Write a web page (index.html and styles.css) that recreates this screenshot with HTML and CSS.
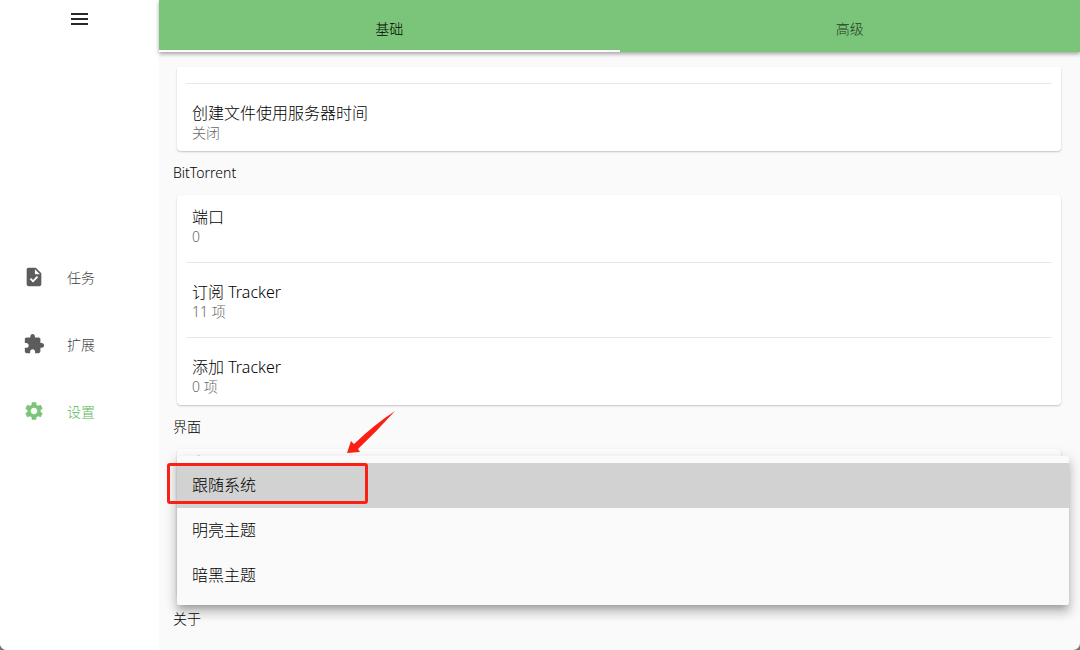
FILE: index.html
```
<!DOCTYPE html>
<html lang="zh-CN">

<head>
  <meta charset="UTF-8">
  <meta name="viewport" content="width=device-width, initial-scale=1.0">
  <title>设置</title>
  <link rel="stylesheet" href="styles.css">
</head>

<body>
  <div class="app">
    <!-- Sidebar -->
    <aside class="sidebar">
      <button class="menu-toggle" type="button" aria-label="菜单">
        <svg width="18" height="12" viewBox="0 0 18 12">
          <path d="M0 0h17v2H0zM0 5h17v2H0zM0 10h17v2H0z" fill="#2b2728"/>
        </svg>
      </button>
      <nav class="nav">
        <a href="#tasks">
          <svg width="22" height="22" viewBox="0 0 24 24">
            <path fill="#5c5c5c" d="M14 2H6c-1.1 0-1.99.9-1.99 2L4 20c0 1.1.89 2 1.99 2H18c1.1 0 2-.9 2-2V8l-6-6zm-3.06 16L7.4 14.46l1.41-1.41 2.12 2.12 4.24-4.24 1.41 1.41L10.94 18zM13 9V3.5L18.5 9H13z"/>
          </svg>
          <span>任务</span>
        </a>
        <a href="#extensions">
          <svg width="22" height="22" viewBox="0 0 24 24">
            <path fill="#5c5c5c" d="M20.5 11H19V7c0-1.1-.9-2-2-2h-4V3.5C13 2.12 11.88 1 10.5 1S8 2.12 8 3.5V5H4c-1.1 0-1.99.9-1.99 2v3.8H3.5c1.49 0 2.7 1.21 2.7 2.7s-1.21 2.7-2.7 2.7H2V20c0 1.1.9 2 2 2h3.8v-1.5c0-1.49 1.21-2.7 2.7-2.7 1.49 0 2.7 1.21 2.7 2.7V22H17c1.1 0 2-.9 2-2v-4h1.5c1.38 0 2.5-1.12 2.5-2.5S21.88 11 20.5 11z"/>
          </svg>
          <span>扩展</span>
        </a>
        <a href="#settings" class="active">
          <svg width="22" height="22" viewBox="0 0 24 24">
            <path fill="#7ac578" d="M19.14 12.94c.04-.3.06-.61.06-.94 0-.32-.02-.64-.07-.94l2.03-1.58c.18-.14.23-.41.12-.61l-1.92-3.32c-.12-.22-.37-.29-.59-.22l-2.39.96c-.5-.38-1.03-.7-1.62-.94l-.36-2.54c-.04-.24-.24-.41-.48-.41h-3.84c-.24 0-.43.17-.47.41l-.36 2.54c-.59.24-1.13.57-1.62.94l-2.39-.96c-.22-.08-.47 0-.59.22L2.74 8.87c-.12.21-.08.47.12.61l2.03 1.58c-.05.3-.09.63-.09.94s.02.64.07.94l-2.03 1.58c-.18.14-.23.41-.12.61l1.92 3.32c.12.22.37.29.59.22l2.39-.96c.5.38 1.03.7 1.62.94l.36 2.54c.05.24.24.41.48.41h3.84c.24 0 .44-.17.47-.41l.36-2.54c.59-.24 1.13-.56 1.62-.94l2.39.96c.22.08.47 0 .59-.22l1.92-3.32c.12-.22.07-.47-.12-.61l-2.01-1.58zM12 15.6c-1.98 0-3.6-1.62-3.6-3.6s1.62-3.6 3.6-3.6 3.6 1.62 3.6 3.6-1.62 3.6-3.6 3.6z"/>
          </svg>
          <span>设置</span>
        </a>
      </nav>
    </aside>

    <!-- Main -->
    <main class="main">
      <div class="tabs">
        <button class="tab active" type="button">基础</button>
        <button class="tab" type="button">高级</button>
      </div>

      <div class="content">
        <div class="card card-cut">
          <hr>
          <div class="item">
            <div class="item-title">创建文件使用服务器时间</div>
            <div class="item-value">关闭</div>
          </div>
        </div>

        <h2>BitTorrent</h2>
        <div class="card">
          <div class="item">
            <div class="item-title">端口</div>
            <div class="item-value">0</div>
          </div>
          <hr>
          <div class="item">
            <div class="item-title">订阅 Tracker</div>
            <div class="item-value">11 项</div>
          </div>
          <hr>
          <div class="item">
            <div class="item-title">添加 Tracker</div>
            <div class="item-value">0 项</div>
          </div>
        </div>

        <h2>界面</h2>
        <div class="card card-theme">
          <div class="item-title">主题</div>

          <!-- Theme dropdown, open -->
          <div class="dropdown">
            <button class="selected" type="button">跟随系统</button>
            <button type="button">明亮主题</button>
            <button type="button">暗黑主题</button>
            <div class="highlight"></div>
            <svg class="arrow" width="48" height="43" viewBox="0 0 48 43">
              <path fill="#fb2016" d="M48 0Q28 13 7 33L4 30L0 42L13 41L11 38Q30 20 48 0Z"/>
            </svg>
          </div>
        </div>

        <h2>关于</h2>
      </div>
    </main>
  </div>
</body>

</html>
```
FILE: styles.css
```
* {
  box-sizing: border-box;
}

body {
  font-family: "Noto Sans", "Noto Sans CJK SC", sans-serif;
  font-weight: 300;
  margin: 0;
  background-color: #777777;
  color: #000000;
}

button {
  font: inherit;
  color: inherit;
  border: none;
  background: none;
  padding: 0;
  cursor: pointer;
}

.app {
  display: flex;
  min-height: 100vh;
  background-color: #fafafa;
  border-radius: 0 0 7px 7px;
  overflow: hidden;
}

/* Sidebar */
.sidebar {
  display: flex;
  flex-direction: column;
  flex: 0 0 159px;
  background-color: #ffffff;
}

.menu-toggle {
  display: flex;
  justify-content: center;
  align-items: center;
  height: 38px;
}

.nav {
  display: flex;
  flex-direction: column;
  justify-content: center;
  flex: 1;
}

.nav a {
  display: flex;
  align-items: center;
  gap: 22px;
  height: 67px;
  padding: 0 0 1px 23px;
  color: #404040;
  font-size: 14px;
  text-decoration: none;
}

.nav a.active {
  color: #5cb85a;
}

/* Tabs */
.main {
  flex: 1;
  min-width: 0;
}

.tabs {
  display: flex;
  position: relative;
  height: 52px;
  padding-top: 7px;
  background-color: #7bc57a;
  box-shadow: 0 2px 4px rgba(0, 0, 0, 0.35);
}

.tab {
  flex: 1;
  padding-bottom: 2px;
  border-bottom: 2px solid transparent;
  color: #1f3c1f;
  font-size: 14px;
}

.tab.active {
  border-bottom-color: #ffffff;
  color: #000000;
}

/* Settings list */
.content {
  padding: 15px 19px 9px 18px;
}

.content h2 {
  margin: 0 0 0 -4px;
  font-size: 14px;
  font-weight: 300;
  line-height: 44px;
}

.card {
  background-color: #ffffff;
  border-radius: 4px;
  box-shadow: 0 1px 2px rgba(0, 0, 0, 0.22);
}

.card-cut {
  padding-top: 9px;
  border-radius: 0 0 4px 4px;
}

.card hr {
  height: 1px;
  margin: 7px 9px;
  border: none;
  background-color: #e8e8e8;
}

.item {
  height: 60px;
  padding: 11px 15px 8px;
}

.item-title {
  font-size: 16px;
  line-height: 22px;
}

.item-value {
  color: #686868;
  font-size: 14px;
  line-height: 18px;
}

/* Theme dropdown */
.card-theme {
  position: relative;
  height: 148px;
  padding: 3px 15px;
}

.dropdown {
  position: absolute;
  top: 7px;
  left: 0;
  right: -8px;
  padding: 7px 0;
  background-color: #fafafa;
  border-radius: 2px;
  box-shadow: 0 5px 6px -3px rgba(0, 0, 0, 0.2),
    0 8px 10px 1px rgba(0, 0, 0, 0.14),
    0 3px 14px 2px rgba(0, 0, 0, 0.12);
}

.dropdown button {
  display: block;
  width: 100%;
  height: 45px;
  padding: 0 15px 3px;
  font-size: 16px;
  text-align: left;
}

.dropdown button.selected {
  background-color: #d2d2d2;
}

.highlight {
  position: absolute;
  top: 7px;
  left: -10px;
  width: 201px;
  height: 41px;
  border: 3px solid #fb2016;
  border-radius: 3px;
  pointer-events: none;
}

.arrow {
  position: absolute;
  top: -45px;
  left: 170px;
  pointer-events: none;
}
```
